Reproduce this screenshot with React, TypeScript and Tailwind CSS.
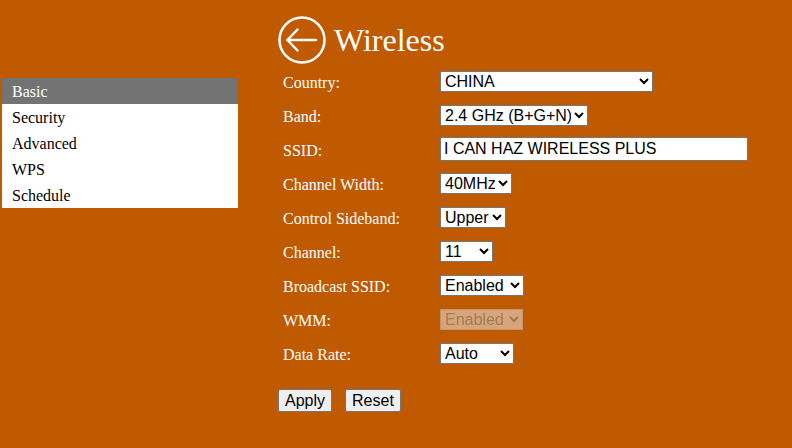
const serif = { fontFamily: '"Liberation Serif", "Times New Roman", serif' };

const menu = ["Basic", "Security", "Advanced", "WPS", "Schedule"];

function BackIcon() {
  return (
    <svg width="48" height="48" viewBox="0 0 48 48" fill="none" stroke="white" strokeWidth="2.5">
      <circle cx="24" cy="24" r="22.5" />
      <path d="M9.5 24H38" strokeLinecap="round" />
      <path d="M19.5 13.5L9.5 24l10 10.5" strokeLinecap="round" strokeLinejoin="round" />
    </svg>
  );
}

const selectCls =
  "h-[21px] bg-white border border-[#767676] text-[16px] text-black font-['Liberation_Sans',Arial,sans-serif] leading-none";

function Row({ label, children }: { label: string; children: React.ReactNode }) {
  return (
    <div className="flex h-[34px] items-center">
      <div className="w-[162px] pl-[5px] pt-[3px] text-[16px] text-white">{label}</div>
      {children}
    </div>
  );
}

export default function App() {
  return (
    <div className="flex min-h-screen bg-[#c05a00]" style={serif}>
      <aside className="ml-[2px] mt-[78px] w-[236px] self-start bg-white">
        {menu.map((m, i) => (
          <div
            key={m}
            className={
              "h-[26px] pl-[10px] pt-[1px] text-[16px] leading-[25px] " +
              (i === 0 ? "bg-[#737373] text-white" : "text-black")
            }
          >
            {m}
          </div>
        ))}
      </aside>

      <main className="ml-[40px] pt-[16px]">
        <div className="flex h-[48px] items-center gap-[8px]">
          <BackIcon />
          <h1 className="text-[32px] leading-none text-white">Wireless</h1>
        </div>

        <Row label="Country:">
          <select className={selectCls + " w-[213px]"} defaultValue="CHINA">
            <option>CHINA</option>
          </select>
        </Row>
        <Row label="Band:">
          <select className={selectCls + " w-[148px]"}>
            <option>2.4 GHz (B+G+N)</option>
          </select>
        </Row>
        <Row label="SSID:">
          <input
            className="h-[24px] w-[308px] border border-[#767676] bg-white px-[3px] text-[16px] text-black font-['Liberation_Sans',Arial,sans-serif]"
            defaultValue="I CAN HAZ WIRELESS PLUS"
          />
        </Row>
        <Row label="Channel Width:">
          <select className={selectCls + " w-[72px]"}>
            <option>40MHz</option>
          </select>
        </Row>
        <Row label="Control Sideband:">
          <select className={selectCls + " w-[66px]"}>
            <option>Upper</option>
          </select>
        </Row>
        <Row label="Channel:">
          <select className={selectCls + " w-[53px]"}>
            <option>11</option>
          </select>
        </Row>
        <Row label="Broadcast SSID:">
          <select className={selectCls + " w-[84px]"}>
            <option>Enabled</option>
          </select>
        </Row>
        <Row label="WMM:">
          <select
            disabled
            className="h-[21px] w-[83px] border border-[#767676]/30 bg-[#efefef]/50 text-[16px] leading-none text-[#101010]/30 font-['Liberation_Sans',Arial,sans-serif]"
          >
            <option>Enabled</option>
          </select>
        </Row>
        <Row label="Data Rate:">
          <select className={selectCls + " w-[74px]"}>
            <option>Auto</option>
          </select>
        </Row>

        <div className="mt-[19px] flex gap-[13px]">
          <button className="h-[23px] rounded-[2px] border border-[#767676] bg-[#efefef] px-[6px] text-[16px] leading-none text-black font-['Liberation_Sans',Arial,sans-serif]">
            Apply
          </button>
          <button className="h-[23px] rounded-[2px] border border-[#767676] bg-[#efefef] px-[6px] text-[16px] leading-none text-black font-['Liberation_Sans',Arial,sans-serif]">
            Reset
          </button>
        </div>
      </main>
    </div>
  );
}
